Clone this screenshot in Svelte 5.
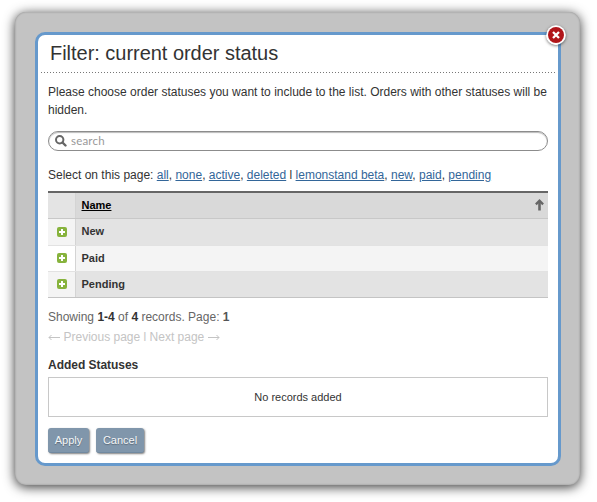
<script>
  const groups = [
    ['all', 'none', 'active', 'deleted'],
    ['lemonstand beta', 'new', 'paid', 'pending'],
  ];
  const rows = ['New', 'Paid', 'Pending'];
</script>

<main>
  <div class="overlay">
    <section class="dialog">
      <button class="close" aria-label="Close">
        <svg width="20" height="20" viewBox="0 0 20 20">
          <circle cx="10" cy="10" r="9.7" fill="#fff" />
          <circle cx="10" cy="10" r="8" fill="#b0151a" />
          <path d="M7 7l6 6M13 7l-6 6" stroke="#fff" stroke-width="2.3" />
        </svg>
      </button>
      <h1><span>Filter: current order status</span></h1>
      <div class="content">
        <p class="intro"><span class="l1">Please choose order statuses you want to include to the list. Orders with other statuses will be</span> hidden.</p>
        <div class="search">
          <svg width="12" height="12" viewBox="0 0 12 12" fill="none" stroke="#666">
            <circle cx="4.7" cy="4.7" r="3.7" stroke-width="2" />
            <path d="M7.5 7.5l3 3" stroke-width="2.4" stroke-linecap="round" />
          </svg>
          <span>search</span>
        </div>
        <p class="select">Select on this page: {#each groups as group, g}{#if g}<span class="bar">{' '}l{' '}</span>{/if}{#each group as name, i}{#if i}{', '}{/if}<a href="#top">{name}</a>{/each}{/each}</p>
        <div class="table">
          <div class="row head">
            <div class="icon"></div>
            <div class="name">
              <span>Name</span>
              <svg width="9" height="12" viewBox="0 0 9 12" fill="none" stroke="#666">
                <path d="M4.5 11.5V2" stroke-width="2.6" />
                <path d="M.9 5.4L4.5 1.7l3.6 3.7" stroke-width="2.3" />
              </svg>
            </div>
          </div>
          {#each rows as name}
            <div class="row">
              <div class="icon">
                <svg width="10" height="10" viewBox="0 0 10 10">
                  <rect width="10" height="10" rx="2" fill="#87b33d" />
                  <path d="M5 2v6M2 5h6" stroke="#fff" stroke-width="2" />
                </svg>
              </div>
              <div class="name">{name}</div>
            </div>
          {/each}
        </div>
        <p class="count">Showing <b>1-4</b> of <b>4</b> records. Page: <b class="cur">1</b></p>
        <p class="pager">
          <svg width="12" height="8" viewBox="0 0 12 8" fill="none" stroke="#c4c4c4"><path d="M12 4.5H1M3.5 2L1 4.5 3.5 7" /></svg>
          <span>Previous page l Next page</span>
          <svg width="12" height="8" viewBox="0 0 12 8" fill="none" stroke="#c4c4c4"><path d="M0 4.5h11M8.5 2L11 4.5 8.5 7" /></svg>
        </p>
        <h2>Added Statuses</h2>
        <div class="empty">No records added</div>
        <div class="actions">
          <button class="apply">Apply</button>
          <button class="cancel">Cancel</button>
        </div>
      </div>
    </section>
  </div>
</main>

<style>
  :global(body) { background: #fff; }
  main {
    box-sizing: border-box;
    width: 597px;
    height: 502px;
    padding: 12px 0 0 15px;
    overflow: hidden;
    font: 12px/18px "Liberation Sans", Arial, sans-serif;
    color: #333;
  }
  p, h1, h2 { margin: 0; }
  .overlay {
    box-sizing: border-box;
    width: 565px;
    height: 473px;
    padding: 20px;
    border-radius: 11px;
    background: #c3c3c3;
    box-shadow: 0 2px 12px rgba(0, 0, 0, .8), inset 0 0 2px rgba(0, 0, 0, .3);
  }
  .dialog {
    position: relative;
    box-sizing: border-box;
    width: 526px;
    height: 434px;
    border: 3px solid #6699cc;
    border-radius: 10px;
    background: #fff;
  }
  .close {
    position: absolute;
    top: -10px;
    right: -8px;
    width: 20px;
    height: 20px;
    padding: 0;
    border: 0;
    border-radius: 50%;
    background: none;
    box-shadow: 0 1px 3px rgba(0, 0, 0, .5);
  }
  .close svg { display: block; }
  h1 {
    height: 38px;
    margin: 0 3px;
    padding-left: 9px;
    font-size: 20px;
    font-weight: 400;
    line-height: 37px;
    letter-spacing: -.03px;
    background: repeating-linear-gradient(90deg, #777 0 1px, #fff 1px 3px) left bottom / 100% 1px no-repeat;
    white-space: nowrap;
  }
  .content { padding: 10px 10px 0; }
  .intro { height: 36px; }
  .l1 { display: block; white-space: nowrap; }
  .search {
    box-sizing: border-box;
    display: flex;
    align-items: center;
    gap: 4px;
    height: 20px;
    margin-top: 12px;
    padding-left: 6px;
    border: 1px solid #8c8c8c;
    border-radius: 10px;
    box-shadow: inset 0 1px 1px #bbb;
    font: 11.5px/20px "Lato", "Open Sans", sans-serif;
    letter-spacing: .2px;
    color: #999;
  }
  .select { margin-top: 15px; white-space: nowrap; }
  a { color: #336699; text-decoration: underline; }
  .table {
    margin-top: 7px;
    border-top: 2px solid #666;
    font-size: 11px;
    font-weight: 700;
  }
  .row {
    box-sizing: border-box;
    display: flex;
    height: 26px;
    border-bottom: 1px solid #e2e2e2;
    background: #f4f4f4;
  }
  .row:nth-child(even) { height: 27px; }
  .icon {
    box-sizing: border-box;
    display: flex;
    align-items: center;
    width: 28px;
    padding-left: 9px;
    border-right: 1px solid #d4d4d4;
    background: #fff;
  }
  .name {
    display: flex;
    flex: 1;
    align-items: center;
    justify-content: space-between;
    padding: 0 4px 2px 5.5px;
  }
  .row:nth-child(3) .icon { padding-bottom: 1px; }
  .row:nth-child(4) .icon { padding-bottom: 1px; }
  .row:nth-child(even) .icon { background: #f4f4f4; }
  .row:nth-child(even) .name { background: #e3e3e3; }
  .row:last-child { height: 26px; border-color: #c4c4c4; }
  .head { border-color: #c8c8c8; color: #000; }
  .head .icon { background: #e4e4e4; }
  .head .name { background: #d9d9d9; }
  .head span { text-decoration: underline; }
  .count { margin-top: 10px; color: #666; }
  .count b { color: #333; }
  .count .cur { color: #555; }
  .pager {
    display: flex;
    align-items: center;
    gap: 3.5px;
    margin-top: 2px;
    color: #c4c4c4;
    white-space: nowrap;
  }
  h2 { margin-top: 10px; font-size: 12px; line-height: 18px; letter-spacing: -.03px; }
  .empty {
    box-sizing: border-box;
    height: 40px;
    margin-top: 3px;
    border: 1px solid #c8c8c8;
    font-size: 11px;
    line-height: 39px;
    text-align: center;
  }
  .actions { display: flex; gap: 7px; margin-top: 11px; }
  .actions button {
    height: 25px;
    padding: 0;
    border: 0;
    border-bottom: 1px solid #7189a0;
    border-radius: 3px;
    background: #8096ab;
    box-shadow: 1px 1px 2px rgba(0, 0, 0, .5);
    color: #f4f6f8;
    font: 11px/24px "Liberation Sans", Arial, sans-serif;
    text-shadow: 0 1px 1px rgba(0, 0, 0, .3);
  }
  .apply { width: 41px; }
  .cancel { width: 48px; }
</style>
